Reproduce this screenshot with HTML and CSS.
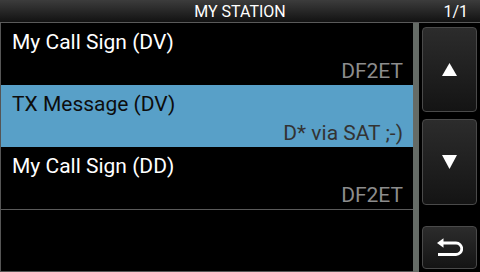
FILE: index.html
```html
<!DOCTYPE html>
<html>
<head>
<meta charset="utf-8">
<link rel="stylesheet" href="styles.css">
</head>
<body>
<div class="screen">
  <div class="titlebar">
    <span class="title">MY STATION</span>
    <span class="page">1/1</span>
  </div>
  <div class="main">
    <div class="list">
      <div class="row">
        <div class="label">My Call Sign (DV)</div>
        <div class="value">DF2ET</div>
      </div>
      <div class="row selected">
        <div class="label">TX Message (DV)</div>
        <div class="value">D* via SAT ;-)</div>
      </div>
      <div class="row last">
        <div class="label">My Call Sign (DD)</div>
        <div class="value">DF2ET</div>
      </div>
    </div>
    <div class="scrollbar"></div>
    <div class="buttons">
      <div class="btn btn-up">
        <svg width="15" height="13" viewBox="0 0 15 13"><polygon points="7.5,0 15,13 0,13" fill="#fff"/></svg>
      </div>
      <div class="btn btn-down">
        <svg width="15" height="14" viewBox="0 0 15 14"><polygon points="0,0 15,0 7.5,14" fill="#fff"/></svg>
      </div>
      <div class="btn btn-back">
        <svg width="26" height="19" viewBox="0 0 26 19"><path d="M5 5 H19 A5.75 5.75 0 0 1 19 16.5 H1" fill="none" stroke="#fff" stroke-width="2.8"/><polygon points="0,5 6.5,0.2 6.5,9.8" fill="#fff"/></svg>
      </div>
    </div>
  </div>
</div>
</body>
</html>
```

FILE: styles.css
```css
html, body {
  margin: 0;
  padding: 0;
  background: #000;
}
.screen {
  width: 480px;
  height: 272px;
  display: flex;
  flex-direction: column;
  font-family: Roboto, "Open Sans", sans-serif;
  overflow: hidden;
}
.titlebar {
  height: 22px;
  border-bottom: 1px solid #5a5a5a;
  background: linear-gradient(#3c3c3c, #121212);
  position: relative;
  display: flex;
  align-items: center;
  justify-content: center;
  color: #fff;
  font-size: 16px;
  line-height: 18px;
  padding-top: 2px;
  box-sizing: border-box;
  flex: none;
  height: 23px;
}
.page {
  position: absolute;
  right: 12px;
  top: 3px;
}
.main {
  flex: 1;
  display: flex;
}
.list {
  width: 412px;
  border-left: 1px solid #555;
  border-bottom: 1px solid #555;
  display: flex;
  flex-direction: column;
}
.row {
  height: 62px;
  box-sizing: border-box;
  display: flex;
  flex-direction: column;
  padding: 0 10px 0 11px;
  color: #fff;
}
.row.last {
  border-bottom: 1px solid #5a5a5a;
  height: 63px;
}
.label {
  font-size: 21px;
  line-height: 24px;
  margin-top: 7px;
}
.value {
  font-size: 21px;
  line-height: 24px;
  margin-top: 5px;
  text-align: right;
  color: #8c8c8c;
}
.row.selected {
  background: #58a0c8;
  color: #0d0d0d;
}
.row.selected .value {
  color: #333;
}
.scrollbar {
  width: 6px;
  background: #656b66;
}
.buttons {
  flex: 1;
  display: flex;
  flex-direction: column;
  padding: 4px 3px 3px 3px;
  gap: 7px;
}
.btn {
  border: 1px solid #4a4a4a;
  border-radius: 4px;
  background: linear-gradient(#2c2c2c, #141414);
  display: flex;
  align-items: center;
  justify-content: center;
  box-sizing: border-box;
}
.btn-up {
  height: 85px;
}
.btn-down {
  height: 86px;
}
.btn-back {
  height: 43px;
  margin-top: 14px;
}
```
